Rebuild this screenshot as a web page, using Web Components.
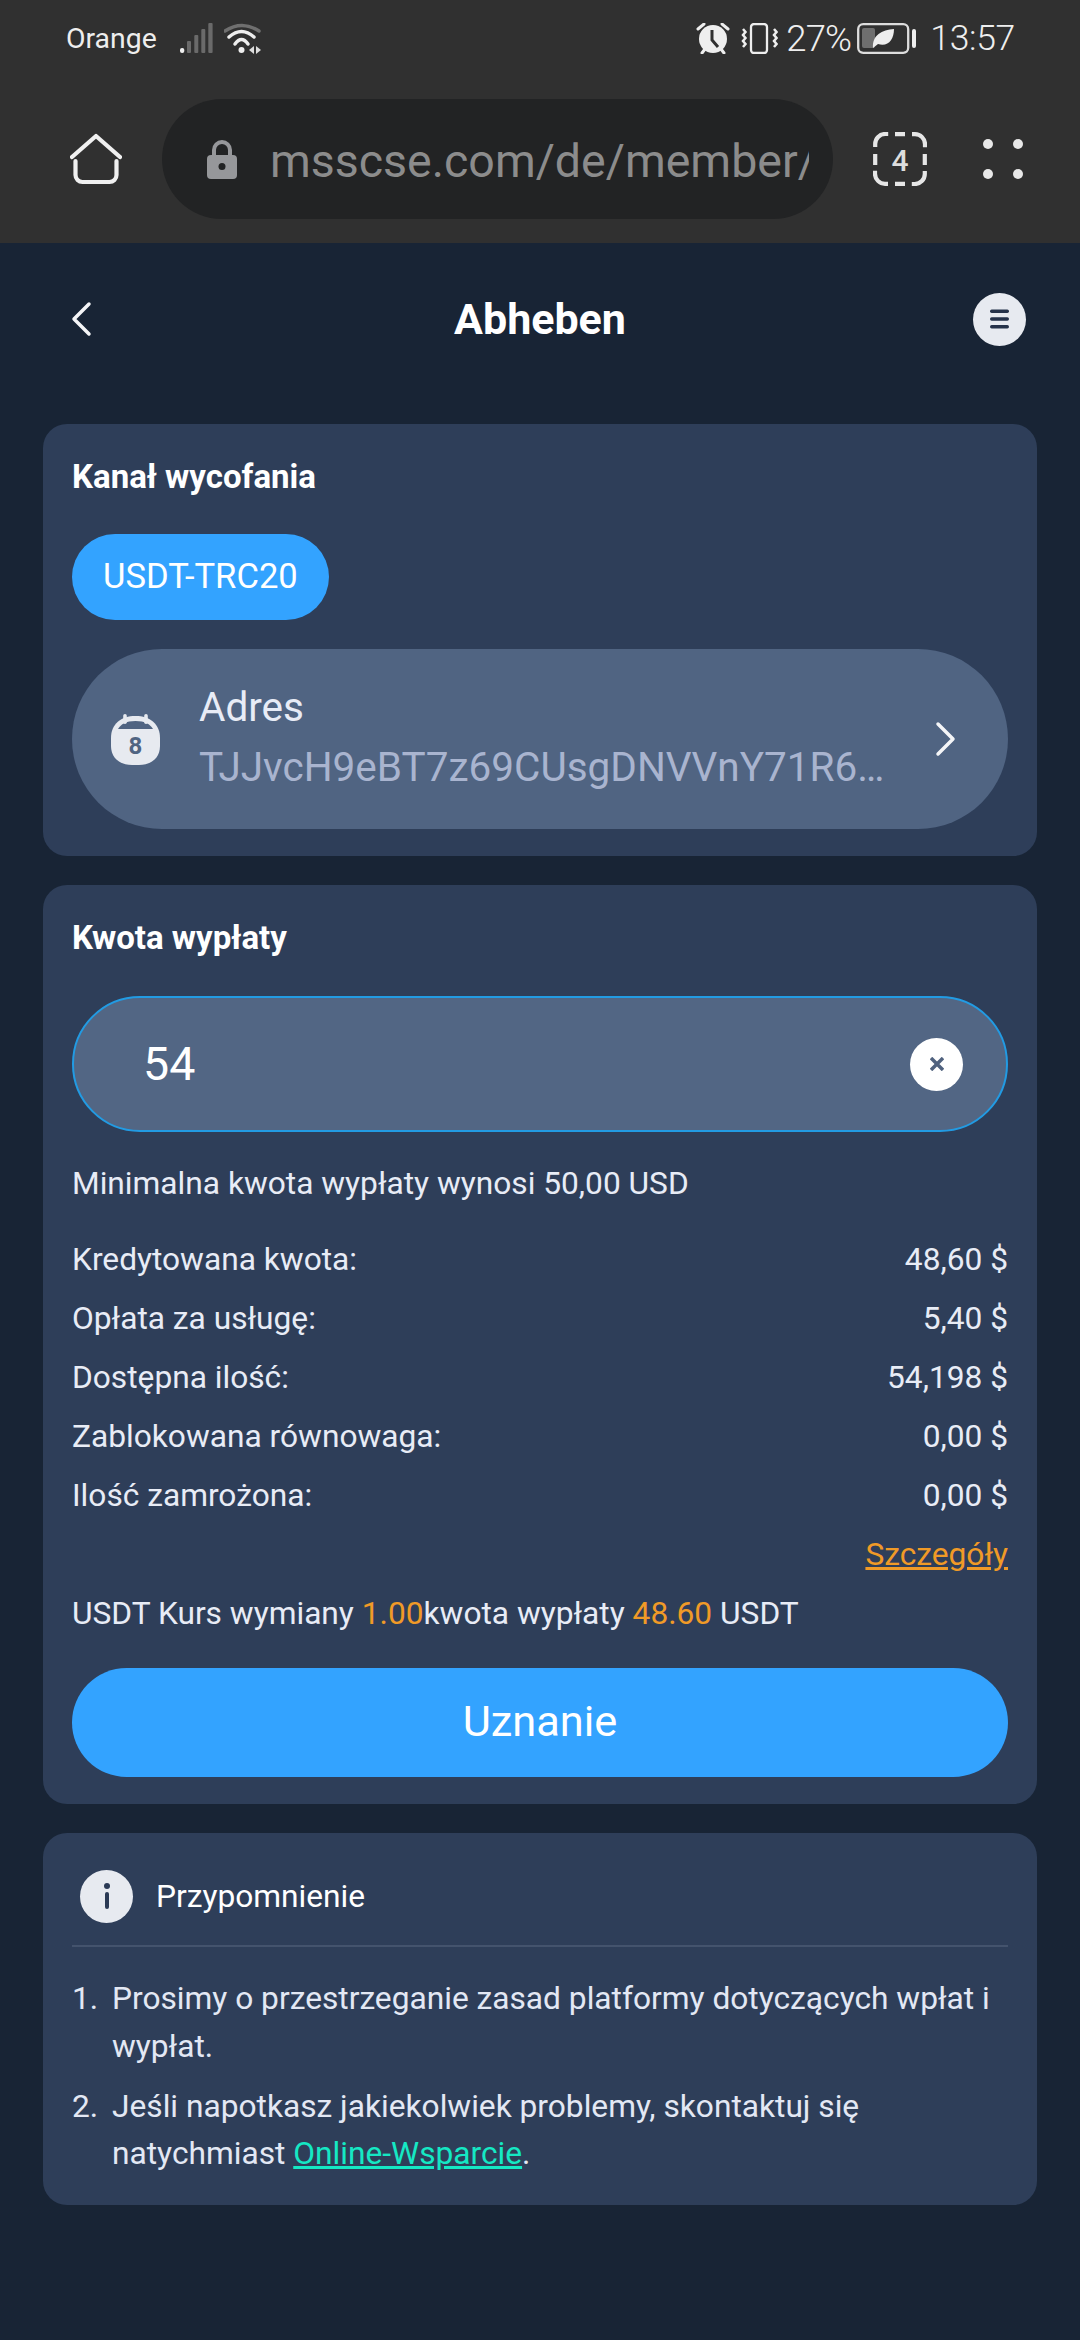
<!DOCTYPE html>
<html lang="pl">
<head>
<meta charset="utf-8">
<title>Abheben</title>
<style>
html, body { margin: 0; padding: 0; background: #182435; }
body { width: 1080px; height: 2340px; overflow: hidden; font-family: Roboto, "Noto Sans", sans-serif; color: #fff; }
.page { display: block; padding: 0 43px; }
.pill-row { margin-top: 33px; height: 86px; }
.min { font-size: 31.7px; line-height: 46px; margin-top: 29px; margin-bottom: 23px; color: #e8ecf6; }
.more { text-align: right; font-size: 31.7px; line-height: 59px; color: #f09a27; text-decoration: underline; }
.rate { font-size: 31.7px; line-height: 59px; color: #e8ecf6; }
.rate span { color: #f09a27; }
</style>
</head>
<body>
<template id="tpl-browser">
<style>
:host { display: block; background: #303030; height: 243px; box-sizing: border-box; color: #eee; }
.status { height: 76px; display: flex; align-items: center; padding: 0 65px 0 66px; font-size: 28.4px; }
.status svg { display: block; flex: none; }
.carrier { margin-right: 23px; }
.grow { flex: 1; }
.pct { font-size: 36.5px; font-weight: 300; margin: 0 6px 0 8px; letter-spacing: -.8px; }
.clock { font-size: 35.5px; font-weight: 300; margin-left: 14px; letter-spacing: -.3px; }
.bar { height: 120px; margin-top: 23px; display: flex; align-items: center; }
.home { margin-left: 70px; flex: none; }
.url { margin-left: 40px; width: 671px; height: 120px; border-radius: 60px; background: #222324; display: flex; align-items: center; box-sizing: border-box; padding: 0 24px 0 45px; flex: none; }
.addr { font-size: 46.5px; color: #8c8c8c; overflow: hidden; white-space: nowrap; margin-left: 33px; flex: 1; padding-top: 4px; }
.tabs { margin-left: 40px; flex: none; }
.dots { margin-left: 56px; flex: none; }
</style>
<div class="status">
  <span class="carrier">Orange</span>
  <svg width="33" height="30" viewBox="0 0 33 30"><rect x="0" y="25" width="4.300" height="5" rx="2" fill="#eee"/><rect x="7" y="18" width="4" height="12" rx="1" fill="#6a6a6a"/><rect x="14.300" y="12" width="4" height="18" rx="1" fill="#6a6a6a"/><rect x="21.300" y="6" width="4" height="24" rx="1" fill="#6a6a6a"/><rect x="28.300" y="0" width="4.300" height="30" rx="1" fill="#6a6a6a"/></svg>
  <svg style="margin-left:11px" width="38" height="31" viewBox="0 0 38 31" fill="none"><path d="M1 8Q18-3 35 8" stroke="#6f6f6f" stroke-width="3.500" stroke-linecap="round"/><path d="M5 14Q17.500 3 30 14" stroke="#eee" stroke-width="3.500" stroke-linecap="round"/><path d="M11 21Q17.500 12 24 21" stroke="#eee" stroke-width="3.500" stroke-linecap="round"/><circle cx="17.500" cy="27" r="3" fill="#eee"/><path d="M30 23v8l-5-4zM32 23l5 4-5 4z" fill="#ddd"/></svg>
  <span class="grow"></span>
  <svg width="34" height="31" viewBox="0 0 34 31"><path d="M2 6l6-5M32 6l-6-5M6 30l3-4M28 30l-3-4" stroke="#eee" stroke-width="3" stroke-linecap="round"/><circle cx="17" cy="16" r="14" fill="#eee"/><path d="M16 7v10l6 7" stroke="#303030" stroke-width="3" fill="none"/></svg>
  <svg style="margin-left:11px" width="37" height="31" viewBox="0 0 37 31" fill="none"><rect x="10" y="1" width="16" height="29" rx="3" stroke="#eee" stroke-width="2.300"/><path d="M2 6l2.500 3-2.500 3 2.500 3-2.500 3 2.500 3-2.500 3M33 6l2.500 3-2.500 3 2.500 3-2.500 3 2.500 3-2.500 3" stroke="#eee" stroke-width="2.500"/></svg>
  <span class="pct">27%</span>
  <svg width="59" height="31" viewBox="0 0 59 31" fill="none"><rect x="1.200" y="1.200" width="50" height="28.600" rx="5" stroke="#ddd" stroke-width="2.300"/><rect x="5" y="5" width="13" height="20" rx="2" fill="#6f6f6f"/><path d="M16 25C15 12 25 7 37 6c0 11-6 18-16 15z" fill="#eee"/><rect x="55" y="6" width="4" height="19" rx="2" fill="#eee"/></svg>
  <span class="clock">13:57</span>
</div>
<div class="bar">
  <svg class="home" width="52" height="52" viewBox="0 0 52 52" fill="none" stroke="#f0f0f0" stroke-width="4.200" stroke-linecap="round" stroke-linejoin="round"><path d="M2 24L26 3l24 21M5.500 28v14a7 7 0 0 0 7 7h27a7 7 0 0 0 7-7V28"/></svg>
  <div class="url">
    <svg width="30" height="39" viewBox="0 0 30 39" style="flex:none"><path d="M7 18v-8a8 8 0 0 1 16 0v8" fill="none" stroke="#96979a" stroke-width="4"/><rect x="0" y="15" width="30" height="24" rx="4" fill="#96979a"/><circle cx="15" cy="26.500" r="3.500" fill="#222324"/></svg>
    <span class="addr">msscse.com/de/member/</span>
  </div>
  <svg class="tabs" width="54" height="54" viewBox="0 0 54 54" fill="none" stroke="#e6e6e6" stroke-width="4.200"><path d="M2.200 15v-3a10 10 0 0 1 10-10h3M39 2.200h3a10 10 0 0 1 10 10v3M51.800 39v3a10 10 0 0 1-10 10h-3M15 51.800h-3a10 10 0 0 1-10-10v-3M22 2.200h10M22 51.800h10M2.200 22v11M51.800 22v11"/><text x="27" y="39" text-anchor="middle" font-family="Roboto, sans-serif" font-weight="500" font-size="30" fill="#ddd" stroke="none">4</text></svg>
  <svg class="dots" width="40" height="40" viewBox="0 0 40 40" fill="#e8e8e8"><circle cx="5" cy="5" r="5"/><circle cx="35" cy="5" r="5"/><circle cx="5" cy="35" r="5"/><circle cx="35" cy="35" r="5"/></svg>
</div>
</template>

<template id="tpl-nav">
<style>
:host { display: flex; align-items: center; justify-content: space-between; height: 152px; margin-bottom: 29px; padding: 0 11px 0 27px; box-sizing: border-box; position: relative; }
h1 { margin: 0; font-size: 43px; font-weight: 700; line-height: 1; position: absolute; left: 0; right: 0; text-align: center; }
.burger { width: 53px; height: 53px; border-radius: 50%; background: #e7eaf0; display: flex; align-items: center; justify-content: center; position: relative; }
</style>
<svg width="22" height="36" viewBox="0 0 22 36" fill="none" stroke="#f4f5f7" stroke-width="3.500" stroke-linecap="round" stroke-linejoin="round"><path d="M19 3L4 18l15 15"/></svg>
<h1><slot></slot></h1>
<div class="burger"><svg width="19" height="20" viewBox="0 0 19 20" fill="#25324a"><rect y="0.500" width="19" height="3.400" rx="1.700"/><rect y="8.300" width="19" height="3.400" rx="1.700"/><rect y="16.100" width="19" height="3.400" rx="1.700"/></svg></div>
</template>

<template id="tpl-card">
<style>
:host { display: block; background: #2e3e59; border-radius: 24px; padding: 29px 29px 27px; margin-bottom: 29px; }
h2 { margin: 0; font-size: 33px; line-height: 48px; font-weight: 700; }
h2:empty { display: none; }
</style>
<h2></h2>
<slot></slot>
</template>

<template id="tpl-pill">
<style>
:host { display: inline-block; background: #33a3ff; color: #fff; border-radius: 43px; height: 86px; line-height: 84px; padding: 0 31px; font-size: 34.600px; }
</style>
<slot></slot>
</template>

<template id="tpl-address">
<style>
:host { display: flex; align-items: center; height: 180px; border-radius: 90px; background: #506482; margin-top: 29px; padding: 0 51px 0 39px; box-sizing: border-box; }
.ico { flex: none; }
.text { flex: 1; min-width: 0; margin-left: 39px; padding-bottom: 4px; }
.label { font-size: 40.500px; line-height: 60px; color: #e8ecf6; }
.val { font-size: 40.500px; line-height: 60px; color: #a9b4cf; width: 686px; overflow: hidden; white-space: nowrap; text-overflow: ellipsis; }
</style>
<svg class="ico" width="49" height="51" viewBox="0 0 49 51"><path d="M24.500 2C10 2 0 10 0 24v8c0 12 9 19 21 19h7c12 0 21-7 21-19v-8C49 10 39 2 24.500 2z" fill="#e7eaf0"/><path d="M7 15c3-5 8-8 17.500-8S39 10 42 15z" fill="#506482"/><rect x="12.200" y="0" width="3.600" height="10" rx="1.800" fill="#e7eaf0"/><rect x="33.200" y="0" width="3.600" height="10" rx="1.800" fill="#e7eaf0"/><text x="24.500" y="40" text-anchor="middle" font-family="Roboto, sans-serif" font-weight="700" font-size="24" fill="#506482">8</text></svg>
<div class="text"><div class="label"><slot name="label"></slot></div><div class="val"><slot name="value"></slot></div></div>
<svg width="22" height="36" viewBox="0 0 22 36" fill="none" stroke="#f4f5f7" stroke-width="3.500" stroke-linecap="round" stroke-linejoin="round"><path d="M3 3l15 15L3 33"/></svg>
</template>

<template id="tpl-amount">
<style>
:host { display: flex; align-items: center; height: 136px; border-radius: 68px; background: #526684; border: 2.300px solid #229be3; margin-top: 34px; padding: 0 43px 0 69px; box-sizing: border-box; font-size: 46.500px; color: #fff; justify-content: space-between; }
.clear { width: 53px; height: 53px; border-radius: 50%; background: #fff; display: flex; align-items: center; justify-content: center; }
</style>
<span><slot></slot></span>
<div class="clear"><svg width="14" height="14" viewBox="0 0 14 14" stroke="#50627f" stroke-width="3.500"><path d="M1 1l12 12M13 1L1 13"/></svg></div>
</template>

<template id="tpl-row">
<style>
:host { display: flex; justify-content: space-between; font-size: 31.700px; line-height: 59px; color: #e8ecf6; }
</style>
<span><slot></slot></span><span><slot name="value"></slot></span>
</template>

<template id="tpl-button">
<style>
:host { display: block; height: 109px; line-height: 107px; margin-top: 25px; border-radius: 55px; background: #33a3ff; color: #fff; text-align: center; font-size: 43.400px; }
</style>
<slot></slot>
</template>

<template id="tpl-notice">
<style>
:host { display: block; }
.head { display: flex; align-items: center; height: 68px; padding: 0 0 15px 8px; border-bottom: 2px solid #44536d; }
.i { width: 53px; height: 53px; border-radius: 50%; background: #e7eaf0; display: flex; align-items: center; justify-content: center; flex: none; }
.title { margin-left: 23px; font-size: 31.700px; color: #fff; }
.list { padding-top: 28px; font-size: 31.700px; line-height: 47.500px; color: #e3e8f4; }
</style>
<div class="head"><div class="i"><svg width="8" height="26" viewBox="0 0 8 26" fill="#2b3a55"><circle cx="4" cy="3" r="3"/><rect x="2" y="9" width="4" height="17" rx="2"/></svg></div><span class="title"><slot name="title"></slot></span></div>
<div class="list"><slot></slot></div>
</template>

<template id="tpl-note">
<style>
:host { display: grid; grid-template-columns: 40px 1fr; margin-bottom: 12.500px; }
:host(:last-of-type) { margin-bottom: 0; }
</style>
<span><slot name="n"></slot></span><span><slot></slot></span>
</template>

<script>
function tplElement(name, id, extra) {
  customElements.define(name, class extends HTMLElement {
    constructor() {
      super();
      this.attachShadow({ mode: 'open' });
      this.shadowRoot.appendChild(document.getElementById(id).content.cloneNode(true));
    }
    connectedCallback() {
      if (extra) extra(this);
    }
  });
}
tplElement('browser-chrome', 'tpl-browser');
tplElement('page-nav', 'tpl-nav');
tplElement('info-card', 'tpl-card', (el) => {
  el.shadowRoot.querySelector('h2').textContent = el.getAttribute('heading') || '';
});
tplElement('channel-pill', 'tpl-pill');
tplElement('address-row', 'tpl-address');
tplElement('amount-field', 'tpl-amount');
tplElement('value-row', 'tpl-row');
tplElement('submit-button', 'tpl-button');
tplElement('notice-box', 'tpl-notice');
tplElement('notice-item', 'tpl-note');
</script>

<browser-chrome></browser-chrome>
<div class="page">
  <page-nav>Abheben</page-nav>
  <info-card heading="Kanał wycofania">
    <div class="pill-row"><channel-pill>USDT-TRC20</channel-pill></div>
    <address-row><span slot="label">Adres</span><span slot="value">TJJvcH9eBT7z69CUsgDNVVnY71R6VnqKpL</span></address-row>
  </info-card>
  <info-card heading="Kwota wypłaty">
    <amount-field>54</amount-field>
    <div class="min">Minimalna kwota wypłaty wynosi 50,00 USD</div>
    <value-row>Kredytowana kwota:<span slot="value">48,60 $</span></value-row>
    <value-row>Opłata za usługę:<span slot="value">5,40 $</span></value-row>
    <value-row>Dostępna ilość:<span slot="value">54,198 $</span></value-row>
    <value-row>Zablokowana równowaga:<span slot="value">0,00 $</span></value-row>
    <value-row>Ilość zamrożona:<span slot="value">0,00 $</span></value-row>
    <div class="more">Szczegóły</div>
    <div class="rate">USDT Kurs wymiany <span>1.00</span>kwota wypłaty <span>48.60</span> USDT</div>
    <submit-button>Uznanie</submit-button>
  </info-card>
  <info-card>
    <notice-box>
      <span slot="title">Przypomnienie</span>
      <notice-item><span slot="n">1.</span>Prosimy o przestrzeganie zasad platformy dotyczących wpłat i wypłat.</notice-item>
      <notice-item><span slot="n">2.</span><span>Jeśli napotkasz jakiekolwiek problemy, skontaktuj się<br>natychmiast <a href="#" style="color:#15e8c4">Online-Wsparcie</a>.</span></notice-item>
    </notice-box>
  </info-card>
</div>
</body>
</html>
